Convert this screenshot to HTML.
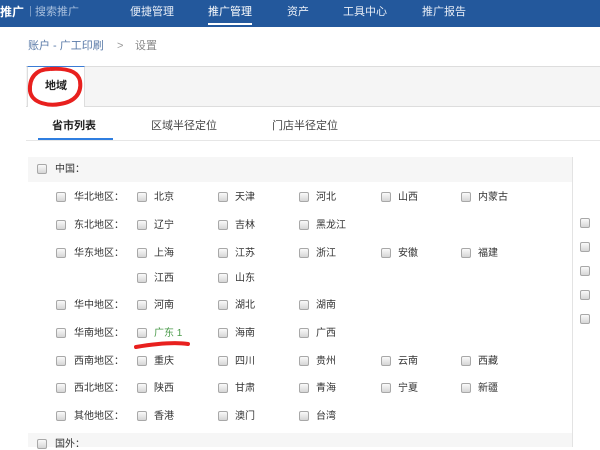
<!DOCTYPE html>
<html><head><meta charset="utf-8"><style>
*{margin:0;padding:0;box-sizing:border-box}
body{width:600px;height:447px;overflow:hidden;background:#fff;position:relative;font-family:"Liberation Sans","Noto Sans CJK SC","WenQuanYi Zen Hei",sans-serif;color:#333}
.a{position:absolute;white-space:nowrap;line-height:1}
.nav{position:absolute;left:0;top:0;width:600px;height:27px;background:#23589c}
.nav .a{color:#e8eef7;font-size:11px;top:7px}
.cb{position:absolute;width:10px;height:10px;border:1px solid #a8a8a8;border-radius:2px;background:linear-gradient(#fafafa,#d6d6d6)}
.t{position:absolute;font-size:10px;line-height:1;white-space:nowrap;color:#333}
</style></head><body>
<div class="nav">
<div class="a" style="left:0;font-weight:bold;color:#fff;font-size:12px;top:6px">推广</div>
<div class="a" style="left:29px;color:#7f9fc8;top:6px">|</div>
<div class="a" style="left:35px;color:#a9c0de">搜索推广</div>
<div class="a" style="left:130px">便捷管理</div>
<div class="a" style="left:208px;color:#fff">推广管理</div>
<div style="position:absolute;left:208px;top:23px;width:44px;height:2px;background:#fff"></div>
<div class="a" style="left:287px">资产</div>
<div class="a" style="left:343px">工具中心</div>
<div class="a" style="left:422px">推广报告</div>
</div>
<div class="a" style="left:28px;top:41px;font-size:11px;color:#5a7aa8">账户 - 广工印刷</div>
<div class="a" style="left:117px;top:41px;font-size:11px;color:#999">&gt;</div>
<div class="a" style="left:135px;top:41px;font-size:11px;color:#888">设置</div>
<div style="position:absolute;left:26px;top:66px;width:574px;height:41px;background:#f5f5f5;border-top:1px solid #ddd;border-bottom:1px solid #ddd"></div>
<div style="position:absolute;left:27px;top:66px;width:58px;height:41px;background:#fff;border-top:1px solid #3a7bd5;border-right:1px solid #ddd;border-left:1px solid #ddd"></div>
<div class="a" style="left:45px;top:81px;font-size:11px;font-weight:bold;color:#222">地域</div>
<svg style="position:absolute;left:26px;top:64px" width="60" height="46"><path d="M24 5 C10 5 3 14 4 27 C6 40 24 42 34 40 C48 38 56 30 54 17 C52 7 40 4 24 5" fill="none" stroke="#e8201e" stroke-width="4"/></svg>
<div class="a" style="left:52px;top:121px;font-size:11px;font-weight:bold;color:#222">省市列表</div>
<div style="position:absolute;left:38px;top:138px;width:75px;height:2px;background:#2f7ee0"></div>
<div class="a" style="left:151px;top:121px;font-size:11px;color:#444">区域半径定位</div>
<div class="a" style="left:272px;top:121px;font-size:11px;color:#444">门店半径定位</div>
<div style="position:absolute;left:26px;top:140px;width:574px;height:1px;background:#e6e6e6"></div>
<div style="position:absolute;left:572px;top:157px;width:1px;height:290px;background:#e3e3e3"></div>
<div style="position:absolute;left:28px;top:157px;width:544px;height:25px;background:#f6f6f6"></div>
<div style="position:absolute;left:28px;top:433px;width:544px;height:14px;background:#f6f6f6"></div>
<div class="cb" style="left:37px;top:164px"></div><div class="t" style="left:55px;top:165px">中国：</div>
<div class="cb" style="left:37px;top:439px"></div><div class="t" style="left:55px;top:440px">国外：</div>
<div id="rows"></div>
<script>
var rows=[[198,"华北地区：",["北京","天津","河北","山西","内蒙古"]],[226,"东北地区：",["辽宁","吉林","黑龙江"]],[254,"华东地区：",["上海","江苏","浙江","安徽","福建"]],[279,"",["江西","山东"]],[306,"华中地区：",["河南","湖北","湖南"]],[334,"华南地区：",["广东 1","海南","广西"]],[362,"西南地区：",["重庆","四川","贵州","云南","西藏"]],[389,"西北地区：",["陕西","甘肃","青海","宁夏","新疆"]],[417,"其他地区：",["香港","澳门","台湾"]]];
var xs=[137,218,299,381,461],h="";
rows.forEach(function(r){var y=r[0];if(r[1]){h+='<div class="cb" style="left:56px;top:'+(y-6)+'px"></div><div class="t" style="left:74px;top:'+(y-5)+'px">'+r[1]+'</div>';}
r[2].forEach(function(p,i){var c=p=="广东 1"?"color:#4a9a4a;":"";h+='<div class="cb" style="left:'+xs[i]+'px;top:'+(y-6)+'px"></div><div class="t" style="'+c+'left:'+(xs[i]+17)+'px;top:'+(y-5)+'px">'+p+'</div>';});});
[223,247,271,295,319].forEach(function(y){h+='<div class="cb" style="left:580px;top:'+(y-5)+'px"></div>';});
document.getElementById("rows").innerHTML=h;
</script>
<svg style="position:absolute;left:132px;top:338px" width="62" height="14"><path d="M4 9 C22 6 42 4 56 6" fill="none" stroke="#e8201e" stroke-width="4" stroke-linecap="round"/></svg>
</body></html>
